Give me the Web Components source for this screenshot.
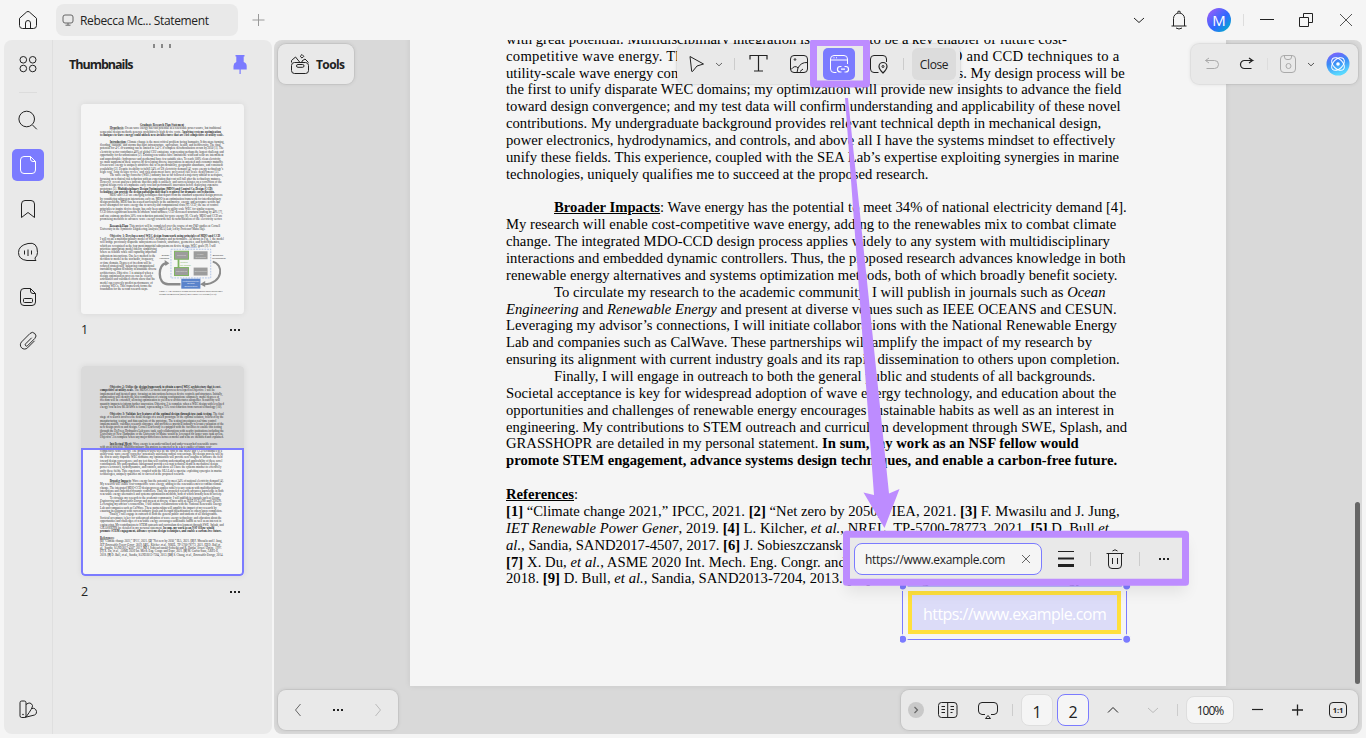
<!DOCTYPE html>
<html lang="en">
<head>
<meta charset="utf-8">
<title>Rebecca Mc... Statement</title>
<style>
    body
    {
        --drop: 2px;
        margin: 0;
        width: 1366px;
        height: 738px;
        overflow: hidden;
        background: #f5f5f5;
        color: #222;
        font: 12px/16px "Open Sans", "Noto Sans", sans-serif;
    }
</style>
</head>
<body>
<app-shell>
    <top-bar slot="top"></top-bar>
    <side-rail slot="side"></side-rail>
    <thumb-panel slot="side"></thumb-panel>
    <doc-viewer></doc-viewer>
</app-shell>
<script>
// 24x24 line icons
const ICONS = {
    home: '<path d="M3.5 10.3 10.6 4q1.4-1.100 2.800 0l7.100 6.300V17.500q0 3-3 3h-11q-3 0-3-3zM9.500 20.500V15a2.500 2.500 0 0 1 5 0v5.500"/>',
    monitor: '<rect x="7" y="7" width="10" height="8" rx="2"/><path d="M12 15v2M9.500 17.200h5"/>',
    plus: '<path d="M12.500 6v12M6.500 12h12"/>',
    plusBold: '<path d="M11.500 6.500v11M6 12h11" stroke-width="1.300"/>',
    minus: '<path d="M6 11.500h11" stroke-width="1.200"/>',
    winmin: '<path d="M5 11.500h14"/>',
    restore: '<path d="M9.500 9.500v-4h9v9h-4M5.500 9.500h9v9h-9z"/>',
    close: '<path d="m6 6 12 12M18 6 6 18"/>',
    x: '<path d="m8 8 8 8M16 8l-8 8"/>',
    down: '<path d="m7 10 5 4.500 5-4.500"/>',
    downSmall: '<path d="m9 11 3 2.800 3-2.800"/>',
    up: '<path d="m7 14.500 5-5 5 5"/>',
    left: '<path d="m14.500 6-5 6 5 6"/>',
    right: '<path d="m9.500 6 5 6-5 6"/>',
    rightSmall: '<path d="m10.500 9 3 3-3 3" stroke-width="1.200"/>',
    bell: '<path d="M4.500 18h15M6.500 18v-7.500a5.500 5.500 0 0 1 11 0V18M10.500 4.600a1.500 1.500 0 0 1 3 0M9 20q3 2 6 0"/>',
    grid: '<circle cx="7.300" cy="7.800" r="3.300"/><circle cx="16.700" cy="7.800" r="3.300"/><circle cx="7.300" cy="16.500" r="3.300"/><circle cx="16.700" cy="16.500" r="3.300"/>',
    search: '<circle cx="10.700" cy="10" r="7.800"/><path d="m16.500 16 4.300 4.300"/>',
    page: '<path d="M14.500 3.500H8q-3.500 0-3.500 3.500v10q0 3.500 3.500 3.500h8q3.500 0 3.500-3.500V8.500zv2.500q0 2.500 2.500 2.500H19.500"/>',
    bookmark: '<path d="M5.500 20.500V7q0-3.500 3.500-3.500h6q3.500 0 3.500 3.500v13.500L12 15.500z"/>',
    comment: '<path d="M20 19.500H11Q2.500 18.500 2.500 11.500T12 2.500t9.500 9q0 3-2.500 5.500 0 1.500 1 2.500zM8.500 9.500v4M12 8.500v6.500M15.500 9.500v4"/>',
    form: '<path d="M14.500 3.500H8q-3.500 0-3.500 3.500v10q0 3.500 3.500 3.500h8q3.500 0 3.500-3.500V8.500zv2.500q0 2.500 2.500 2.500H19.500"/><rect x="7.500" y="13.500" width="9" height="4" rx="1"/>',
    clip: '<path d="m15.500 8.500-6.300 6.300a1.300 1.300 0 0 0 2 2l7.600-7.600a3.600 3.600 0 0 0-5.100-5.100L5 12.800a4.300 4.300 0 0 0 6.200 6.200l7.300-7.300" transform="translate(.8 .6) scale(.96)"/>',
    swatch: '<rect x="4" y="4" width="6" height="16.500" rx="1.700"/><path d="M10 7.500q4.500-3.500 6.500 1 .500 2-6.500 11.500M16 11.500q3.500-1 4.500 3 .500 2.500-2 3.500L8.500 20.500"/><circle cx="7" cy="17.500" r=".4"/>',
    pin: '<path fill="currentColor" stroke="none" d="M7.500 3h9v1.500h-.8v5.500q3 1.200 3 4V17.500H5.500V14q0-2.800 2.800-4V4.500h-.8zM11.500 17h1.200v5h-1.200z"/>',
    tools: '<rect x="3.500" y="10.500" width="17" height="11" rx="3"/><rect x="8.500" y="12.500" width="7.500" height="2.800" rx="1.400"/><path d="M3.500 10.500v-2l4-3.500 4.500 5.500M14 10.500v-1.500l3-2 3.500 3.500M14 2.500l1.800 1.800L14 6.100l-1.800-1.800z"/>',
    undo: '<path d="M10 6 6.500 8.500h9a4 4 0 0 1 0 8H7.500M6.500 8.500 10 11"/>',
    redo: '<path d="M14 6l3.500 2.500h-8a4 4 0 0 0 0 8h7M17.500 8.500 14 11" stroke-width="1.200"/>',
    save: '<rect x="4.500" y="3.500" width="15" height="17" rx="3.500"/><path d="M8.500 3.500v1.500q0 2.500 2.500 2.500h2q2.500 0 2.500-2.500V3.500"/><circle cx="12.500" cy="14" r="2.500"/>',
    cursor: '<path d="M5 4.500 18.500 12l-6.500 2-4.500 5.500q-.500.500-.800-.2z" stroke-linejoin="round"/>',
    text: '<path d="M3 7.500v-4h17v4M11.500 3.500v15.500M7 19h9" stroke-width="1.200"/>',
    image: '<rect x="3.500" y="3.500" width="17" height="17" rx="3.500"/><circle cx="8" cy="7.500" r=".8"/><path d="M4 17.500q4-5 7-1.500l-1 4.500M11 16q3-6 9.500-5.500M13 19.500l3-2.500"/>',
    weblink: '<path d="M9.500 20.500H7q-3.500 0-3.500-3.500V7q0-3.500 3.500-3.500h10q3.500 0 3.500 3.500v5M3.500 8h17M6.500 5.800h1M9 5.800h1"/><path d="M14.500 14.500h-1.300a2.700 2.700 0 0 0 0 5.500h1.300M17.500 14.500h1.300a2.700 2.700 0 0 1 0 5.500h-1.300M14 17.200h4" stroke-width="1.200"/>',
    place: '<path d="M11.500 20.500H7q-3.500 0-3.500-3.500V7q0-3.500 3.500-3.500h9q3.500 0 3.500 3.500v3"/><path d="M16 21q-4-4-4-6.500a4 4 0 0 1 8 0q0 2.500-4 6.500z" stroke-width="1.200"/><circle cx="16" cy="14.500" r="1"/>',
    weight: '<path d="M4 4.500h16" stroke-width="1"/><path d="M4 11.500h16" stroke-width="2"/><path d="M4 18.500h16" stroke-width="3"/>',
    trash: '<path d="M3.500 6.500h17M5.500 6.500V18q0 3.500 3.500 3.500h6q3.500 0 3.500-3.500V6.500M9.500 4q2.500-2.500 5 0M9.500 11v6M14.500 11v6"/>',
    book: '<rect x="2.500" y="4.500" width="18.500" height="15" rx="3"/><path d="M11.700 4.500v15M5.500 8.500H9M5.500 11.500H9M5.500 14.500H9M14.500 8.500h3.500M14.500 11.500h3.500M14.500 14.500h2"/>',
    present: '<path d="M9 16.500H6Q2.500 16 2.500 13V8q0-3.500 3.500-3.500h12q3.500 0 3.500 3.500v5q0 3-3.500 3.500h-3M12 17.500l2.500 3h-5z"/>',
    dots: '<path fill="currentColor" stroke="none" d="M7 11h2v2H7zM11 11h2v2h-2zM15 11h2v2h-2z"/>'
};

// [text, width, indent]; null is an empty line
const SHEETS = {
    one: [
        ['<b><u>Graduate Research Plan Statement</u></b>', 222, 200],
        ['<b><u>Hypothesis</u></b>: Ocean wave energy has vast potential as a renewable power source, but traditional', 560, 48],
        ['sequential design methods generate prohibitively high device costs. <b>Applying systems optimization</b>', 607],
        ['<b>techniques to wave energy could unlock new architectures that are cost competitive at utility scale.</b>', 621],
        null,
        ['<b><u>Introduction</u></b>: Climate change is the most critical problem facing humanity. It threatens farming,', 576, 48],
        ['flooding, tsunami, and storms that hurt infrastructure, agriculture, health, and biodiversity. The final', 606],
        ['potential for 4°C of warming can be limited to 1.4°C if complete decarbonization occurs by 2050 [1]. The', 620],
        ['electricity sector contributes 40% of global CO2 emissions, representing perhaps the largest challenge and', 622],
        ['opportunity for decarbonization [2]. Existing renewables have limitations: wind and solar are intermittent', 620],
        ['and unpredictable; hydropower and geothermal have few suitable sites. To reach 100% clean electricity,', 608],
        ['we must supplement these sources by developing diverse innovations in untested and economic maturity.', 618],
        ['Ocean wave energy is uniquely attractive due to its predictability, geographic abundance, and consistent', 617],
        ['availability [3]. Despite its ability to fulfill 34% of US electricity demand [4], wave energy technology’s', 618],
        ['high cost, long design cycles, and risk abatement have prevented full scale deployment [5].', 598],
        ['The wave energy converter (WEC) industry has so far followed a trajectory similar to aerospace,', 570, 48],
        ['focusing on technical risk reduction with an expectation that cost will fall after the technology matures.', 606],
        ['However, recent analyses indicate that this path is unlikely, and success hinges on a correction of the', 612],
        ['typical design cycle to emphasize early cost and performance innovation before deploying expensive', 594],
        ['prototypes [5]. <b>Multidisciplinary Design Optimization (MDO) and Control Co-Design (CCD)</b>', 565],
        ['<b>techniques can provide the design paradigm shift that is required for dramatic cost reduction.</b>', 575],
        ['MDO and CCD are emerging techniques that depart from the standard sequential design process', 566, 48],
        ['by considering subsystem interactions early on. MDO is an optimization framework for interdisciplinary', 608],
        ['design problems. MDO has been used successfully in the automotive, energy, and aerospace sectors but', 602],
        ['never attempted for wave energy due to novelty and computational costs [6]. CCD, the use of control', 594],
        ['principles to inspire device design, has only been applied to utility scale WEC for similar reasons.', 576],
        ['CCD offers significant benefits in offshore wind turbines; CCD decreased structural loading by 40% [7],', 616],
        ['and one estimate predicts 50% cost reduction potential for wave energy [8]. Clearly, MDO and CCD are', 614],
        ['promising methods to advance wave energy towards full decarbonization of the electricity sector.', 614],
        null,
        ['<b><u>Research Plan</u></b>: This project will be completed over the course of my PhD studies at Cornell', 555, 48],
        ['University in the Symbiotic Engineering Analysis (SEA) Lab, led by Professor Maha Haji.', 528],
        null,
        ['<b>Objective 1: Develop a novel WEC design framework using principles of MDO and CCD</b>', 555, 48],
        ['I will create a multidisciplinary model of WEC dynamics and performance. As shown in Fig. 1, the model', 622],
        ['will bridge previously disparate subsystems as controls, structures, geometries, and hydrodynamics,', 602],
        ['which are recognized as the four most impactful subsystems on device design. WEC goals [9]. I will', 580],
        ['prioritize appropriate model fidelity, simplifying', 284],
        ['where as feasible while still capturing important', 284],
        ['subsystem interactions. One key method is the', 278],
        ['decision to model in the stochastic, frequency,', 270],
        ['or time domain. Degrees of freedom will be', 258],
        ['reduced strategically, balancing computational', 272],
        ['tractability against flexibility in attainable diverse', 284],
        ['architectures. Objective 1 is attained when a', 266],
        ['design optimization process can be clearly', 262],
        ['articulated and validated efforts show that the', 276],
        ['model can correctly predict performance of', 264],
        ['existing WECs. This framework forms the', 260],
        ['foundation for the second research steps.', 240]
    ],
    two: [
        ['<b>Objective 2: Utilize the design framework to obtain a novel WEC architecture that is cost-</b>', 560, 48],
        ['<b>competitive at utility-scale.</b> The MDO/CCD model and process developed in Objective 1 will be', 576],
        ['implemented and iterated upon, focusing on interactions between device controls and structures. Initially,', 616],
        ['optimization will identify the best combination of existing configurations; ultimately, model degrees of', 598],
        ['freedom will be extended, allowing optimization to yield new architectures altogether. Sensitivity will', 602],
        ['quantify impacts to inform further innovation. Objective 2 is complete when a WEC design with levelized', 622],
        ['energy cost below $0.30/kWh is found, representing a 75% cost reduction from current technology [10].', 612],
        null,
        ['<b>Objective 3: Validate key features of the optimal design through tow-tank testing.</b> The final', 574, 48],
        ['stage of research involves the detail design of a scaled prototype of the optimal solution, followed by the', 620],
        ['manufacturing, testing, and data analysis of the prototype. The testing investigates real-time control', 584],
        ['implementation, validates research outcomes, and provides a practical industry-relevant evaluation of the', 622],
        ['new design process and design. Cornell University is equipped with the facilities to enable this testing', 612],
        ['through the DeFrees Hydraulics Lab wave tank, and collaborations with nearby institutions including the', 622],
        ['University of New Hampshire or the University of Maine would be leveraged for larger wave tank access.', 618],
        ['Objective 3 is complete when any major differences between model and tests are identified and explained.', 622],
        null,
        ['<b><u>Intellectual Merit</u></b>: Wave energy is an under-utilized and under-researched renewable source', 542, 48],
        ['with great potential. Multidisciplinary integration is expected to be a key enabler of future cost-', 561],
        ['competitive wave energy. The proposed work will be the first to use MDO and CCD techniques to a', 614],
        ['utility-scale wave energy converter, potentially unlocking radical cost savings. My design process will be', 619],
        ['the first to unify disparate WEC domains; my optimization will provide new insights to advance the field', 615],
        ['toward design convergence; and my test data will confirm understanding and applicability of these novel', 615],
        ['contributions. My undergraduate background provides relevant technical depth in mechanical design,', 595],
        ['power electronics, hydrodynamics, and controls, and above all I have the systems mindset to effectively', 609],
        ['unify these fields. This experience, coupled with the SEA Lab’s expertise exploiting synergies in marine', 613],
        ['technologies, uniquely qualifies me to succeed at the proposed research.', 422],
        null,
        ['<b><u>Broader Impacts</u></b>: Wave energy has the potential to meet 34% of national electricity demand [4].', 573, 48],
        ['My research will enable cost-competitive wave energy, adding to the renewables mix to combat climate', 610],
        ['change. The integrated MDO-CCD design process applies widely to any system with multidisciplinary', 604],
        ['interactions and embedded dynamic controllers. Thus, the proposed research advances knowledge in both', 620],
        ['renewable energy alternatives and systems optimization methods, both of which broadly benefit society.', 611],
        ['To circulate my research to the academic community, I will publish in journals such as <i>Ocean</i>', 552, 48],
        ['<i>Engineering</i> and <i>Renewable Energy</i> and present at diverse venues such as IEEE OCEANS and CESUN.', 611],
        ['Leveraging my advisor’s connections, I will initiate collaborations with the National Renewable Energy', 611],
        ['Lab and companies such as CalWave. These partnerships will amplify the impact of my research by', 586],
        ['ensuring its alignment with current industry goals and its rapid dissemination to others upon completion.', 614],
        ['Finally, I will engage in outreach to both the general public and students of all backgrounds.', 541, 48],
        ['Societal acceptance is key for widespread adoption of wave energy technology, and education about the', 610],
        ['opportunities and challenges of renewable energy encourages sustainable habits as well as an interest in', 608],
        ['engineering. My contributions to STEM outreach and curriculum development through SWE, Splash, and', 621],
        ['GRASSHOPR are detailed in my personal statement. <b>In sum, my work as an NSF fellow would</b>', 573],
        ['<b>promote STEM engagement, advance systems design techniques, and enable a carbon-free future.</b>', 611],
        null,
        ['<b><u>References</u></b>:', 72],
        ['<b>[1]</b> “Climate change 2021,” IPCC, 2021. <b>[2]</b> “Net zero by 2050,” IEA, 2021. <b>[3]</b> F. Mwasilu and J. Jung,', 614],
        ['<i>IET Renewable Power Gener</i>, 2019. <b>[4]</b> L. Kilcher, <i>et al.</i>, NREL, TP-5700-78773, 2021. <b>[5]</b> D. Bull <i>et</i>', 603],
        ['<i>al.</i>, Sandia, SAND2017-4507, 2017. <b>[6]</b> J. Sobieszczanski-Sobieski and R. Haftka, <i>Struct. Optim.</i>, 1997.', 612],
        ['<b>[7]</b> X. Du, <i>et al.</i>, ASME 2020 Int. Mech. Eng. Congr. and Expo, 2021. <b>[8]</b> M. Garcia-Sanz, ARPA-E,', 596],
        ['2018. <b>[9]</b> D. Bull, <i>et al.</i>, Sandia, SAND2013-7204, 2013. <b>[10]</b> S. Chung, <i>et al.</i>, <i>Renewable Energy</i>, 2014.', 618]
    ]
};

class UiIcon extends HTMLElement
{
    connectedCallback()
    {
        const root = this.attachShadow({mode: "open"});
        root.innerHTML = `
            <style>
                :host { display: block; width: 24px; height: 24px; flex: none; }
                svg { display: block; fill: none; stroke: currentColor; stroke-width: 1; }
            </style>
            <svg width="24" height="24" viewBox="0 0 24 24">${ICONS[this.getAttribute("name")]}</svg>
        `;
    }
}

// One line of text spread to an exact width
class FitText extends HTMLElement
{
    connectedCallback()
    {
        const root = this.attachShadow({mode: "open"});
        root.innerHTML = `
            <style>
                :host { display: block; padding-top: var(--drop, 0); white-space: nowrap; flex: none; }
                span { display: inline-block; }
            </style>
            <span><slot></slot></span>
        `;
        const span = root.querySelector("span");
        const width = Number(this.getAttribute("width"));
        const natural = span.offsetWidth;
        if (width && natural)
            span.style.letterSpacing = `${(width - natural) / this.textContent.length}px`;
    }
}

class DocPage extends HTMLElement
{
    connectedCallback()
    {
        const root = this.attachShadow({mode: "open"});
        const name = this.getAttribute("sheet");
        // lines before "from" are scrolled out, only their height is kept
        const from = Number(this.getAttribute("from") || 0);
        const lines = SHEETS[name].map((line, i) => {
            if (!line || i < from)
                return '<p></p>';
            return `<p style="padding-left:${line[2] || 0}px"><fit-text width="${line[1]}">${line[0]}</fit-text></p>`;
        }).join("");
        root.innerHTML = `
            <style>
                :host
                {
                    --drop: 0;
                    display: block;
                    position: relative;
                    box-sizing: border-box;
                    width: 816px;
                    height: 1056px;
                    padding: 97.4px 96px 0;
                    background: #f5f5f5;
                    color: #000;
                    font: 14.65px/16.86px "Liberation Serif", serif;
                }
                p { margin: 0; height: 16.86px; }
                figure { position: absolute; left: 388px; top: 714px; margin: 0; }
            </style>
            ${lines}
            ${name === "one" ? '<figure><wec-figure></wec-figure></figure>' : ''}
        `;
    }
}

class WecFigure extends HTMLElement
{
    connectedCallback()
    {
        this.attachShadow({mode: "open"}).innerHTML = `
            <style>
                svg { display: block; font: 12px "Liberation Sans", sans-serif; text-anchor: middle; }
                .small { font: 12px "Liberation Serif", serif; text-anchor: start; }
            </style>
            <svg width="344" height="250" viewBox="0 0 344 250">
                <text x="162" y="12" fill="#3f6fc4">WEC Model</text>
                <rect x="64" y="16" width="200" height="144" fill="#f5f5f5" stroke="#6c94d8" stroke-width="3" stroke-dasharray="9 5"/>
                <path d="M102 66v60" stroke="#68a845" stroke-width="9"/>
                <g fill="#8c8c8c" stroke="#68a845" stroke-width="5">
                    <rect x="82" y="26" width="70" height="40"/>
                    <rect x="82" y="108" width="70" height="40"/>
                </g>
                <rect x="178" y="26" width="70" height="40" fill="#8c8c8c"/>
                <rect x="178" y="108" width="70" height="40" fill="#8c8c8c"/>
                <g fill="#ddd">
                    <text x="117" y="50">Controls</text><text x="213" y="44">Hydro-</text><text x="213" y="58">dynamics</text>
                    <text x="117" y="132">Structures</text><text x="213" y="132">Geometries</text>
                </g>
                <text x="130" y="84" fill="#68a845">Control</text><text x="137" y="98" fill="#68a845">Co-design</text>
                <text x="36" y="52">Design</text><text x="30" y="66">Variables</text>
                <text x="300" y="52">Economic</text><text x="306" y="66">Performance</text>
                <path d="M112 192H50C-8 190-2 90 40 86" fill="none" stroke="#777" stroke-width="12"/>
                <path d="m32 70 24 16-20 14z" fill="#777"/>
                <path d="M274 78C330 90 330 188 230 192" fill="none" stroke="#777" stroke-width="10"/>
                <path d="m236 176-26 16 26 14z" fill="#777"/>
                <rect x="116" y="164" width="96" height="50" fill="#3f6fc4"/>
                <g fill="#e5ebf8"><text x="164" y="178">Multidisciplinary</text><text x="164" y="193">Design</text><text x="164" y="208">Optimization</text></g>
                <text class="small" x="4" y="230">Figure 1: The proposed design process integrates Multidisciplinary</text>
                <text class="small" x="4" y="245">Design Optimization (MDO) and Control Co-Design (CCD)</text>
            </svg>
        `;
    }
}

class AppShell extends HTMLElement
{
    connectedCallback()
    {
        this.attachShadow({mode: "open"}).innerHTML = `
            <style>
                :host { display: flex; flex-direction: column; width: 1366px; height: 738px; }
                .body { display: flex; gap: 2px; flex: 1; padding: 0 4px 4px; min-height: 0; }
                .side
                {
                    display: flex;
                    width: 268px;
                    flex: none;
                    background: #e9e9e9;
                    border-radius: 8px;
                }
            </style>
            <slot name="top"></slot>
            <div class="body">
                <div class="side"><slot name="side"></slot></div>
                <slot></slot>
            </div>
        `;
    }
}

class TopBar extends HTMLElement
{
    connectedCallback()
    {
        this.attachShadow({mode: "open"}).innerHTML = `
            <style>
                :host { display: flex; align-items: center; height: 40px; flex: none; padding-left: 16px; }
                .tab
                {
                    display: flex;
                    align-items: center;
                    box-sizing: border-box;
                    width: 182px;
                    height: 32px;
                    margin: 0 8px 0 16px;
                    border-radius: 8px;
                    background: #e9e9e9;
                }
                .tab ui-icon { color: #666; }
                .add { color: #999; }
                .right { display: flex; align-items: center; margin-left: auto; }
                .cell { display: flex; justify-content: center; width: 40px; }
                .avatar
                {
                    width: 24px;
                    height: 24px;
                    border-radius: 50%;
                    color: #fff;
                    font: 15px/24px "Open Sans", sans-serif;
                    text-align: center;
                    background: linear-gradient(135deg, #a05cf8 5%, #2f68ff 55%, #00b4c8 95%);
                }
                i { width: 1px; height: 12px; margin: 0 3px 0 4px; background: #ddd; }
            </style>
            <ui-icon name="home"></ui-icon>
            <div class="tab"><ui-icon name="monitor"></ui-icon><fit-text width="129">Rebecca Mc... Statement</fit-text></div>
            <ui-icon class="add" name="plus"></ui-icon>
            <div class="right">
                <div class="cell"><ui-icon name="down"></ui-icon></div>
                <div class="cell"><ui-icon name="bell"></ui-icon></div>
                <div class="cell"><div class="avatar">M</div></div>
                <i></i>
                <div class="cell" style="width:39px"><ui-icon name="winmin"></ui-icon></div>
                <div class="cell"><ui-icon name="restore"></ui-icon></div>
                <div class="cell" style="color:#555"><ui-icon name="close"></ui-icon></div>
            </div>
        `;
    }
}

class SideRail extends HTMLElement
{
    connectedCallback()
    {
        this.attachShadow({mode: "open"}).innerHTML = `
            <style>
                :host
                {
                    display: flex;
                    flex-direction: column;
                    align-items: center;
                    width: 48px;
                    border-right: 1px solid #dfdfdf;
                }
                div { display: grid; place-items: center; width: 32px; height: 32px; margin: 6px 0; }
                .first { margin: 8px 0; }
                .active { background: #7b7bff; border-radius: 5px; color: #fff; }
                .last { margin: auto 0 9px; }
                i { width: 18px; height: 1px; margin: 4px 0 6px; background: #dcdcdc; }
            </style>
            <div class="first"><ui-icon name="grid"></ui-icon></div>
            <i></i>
            <div><ui-icon name="search"></ui-icon></div>
            <div class="active"><ui-icon name="page"></ui-icon></div>
            <div><ui-icon name="bookmark"></ui-icon></div>
            <div><ui-icon name="comment"></ui-icon></div>
            <div><ui-icon name="form"></ui-icon></div>
            <div><ui-icon name="clip"></ui-icon></div>
            <div class="last"><ui-icon name="swatch"></ui-icon></div>
        `;
    }
}

class ThumbPanel extends HTMLElement
{
    connectedCallback()
    {
        this.attachShadow({mode: "open"}).innerHTML = `
            <style>
                :host { display: flex; flex-direction: column; flex: 1; }
                .grip { display: flex; justify-content: center; gap: 6px; padding: 4px 2px 0 0; height: 4px; }
                .grip i { width: 2px; height: 4px; background: #888; }
                header
                {
                    display: flex;
                    justify-content: space-between;
                    align-items: center;
                    height: 24px;
                    margin: 4px 20px 28px 16px;
                    font-weight: 700;
                    font-size: 12.5px;
                }
                header ui-icon { color: #7b7bff; }
                page-thumb + page-thumb { margin-top: 24px; }
            </style>
            <div class="grip"><i></i><i></i><i></i></div>
            <header><fit-text width="63">Thumbnails</fit-text><ui-icon name="pin"></ui-icon></header>
            <page-thumb sheet="one">1</page-thumb>
            <page-thumb sheet="two" view>2</page-thumb>
        `;
    }
}

class PageThumb extends HTMLElement
{
    connectedCallback()
    {
        this.attachShadow({mode: "open"}).innerHTML = `
            <style>
                :host { display: block; width: 163px; height: 238px; margin-left: 28px; }
                .sheet
                {
                    position: relative;
                    width: 163px;
                    height: 210px;
                    overflow: hidden;
                    border-radius: 4px;
                    background: #f5f5f5;
                    box-shadow: 0 0 6px rgba(0, 0, 0, .08);
                }
                doc-page { transform: scale(.199); transform-origin: 0 0; opacity: .85; }
                .shade { position: absolute; inset: 0 0 128px; background: rgba(0, 0, 0, .11); }
                .view
                {
                    position: absolute;
                    inset: 82px 0 0;
                    border: 2px solid #7b7bff;
                    border-radius: 0 0 4px 4px;
                }
                :host(:not([view])) .shade, :host(:not([view])) .view { display: none; }
                .foot { display: flex; justify-content: space-between; align-items: center; height: 32px; font-size: 12.5px; margin-right: -3px; }
            </style>
            <div class="sheet">
                <doc-page sheet="${this.getAttribute("sheet")}"></doc-page>
                <div class="shade"></div>
                <div class="view"></div>
            </div>
            <div class="foot"><slot></slot><ui-icon name="dots"></ui-icon></div>
        `;
    }
}

// Rounded floating strip, 40px high
class FloatBar extends HTMLElement
{
    connectedCallback()
    {
        this.attachShadow({mode: "open"}).innerHTML = `
            <style>
                :host
                {
                    display: flex;
                    align-items: center;
                    height: 40px;
                    border-radius: 8px;
                    background: #e9e9e9;
                    box-shadow: 0 0 0 1px rgba(0, 0, 0, .04), 0 0 4px rgba(0, 0, 0, .12);
                }
            </style>
            <slot></slot>
        `;
    }
}

class DocViewer extends HTMLElement
{
    connectedCallback()
    {
        this.attachShadow({mode: "open"}).innerHTML = `
            <style>
                :host
                {
                    display: block;
                    position: relative;
                    flex: 1;
                    overflow: hidden;
                    border-radius: 8px;
                    background: #d9d9d9;
                }
                .page { margin: -410px 0 0 136px; width: 816px; box-shadow: 0 0 6px rgba(0, 0, 0, .08); }
                float-bar, link-box, link-bar { position: absolute; }
                .tools { left: 4px; top: 4px; width: 76px; }
                .tools ui-icon { margin: 0 4px 0 10px; }
                .edit { left: 403px; top: 4px; width: 283px; }
                .history { right: 4px; top: 4px; width: 167px; }
                .nav { left: 4px; bottom: 4px; width: 120px; }
                .pager { right: 4px; bottom: 4px; width: 457px; }
                link-box { left: 626px; top: 543px; }
                link-bar { left: 576px; top: 498px; }
                .cell { display: flex; align-items: center; justify-content: center; flex: none; }
                .sep { width: 1px; height: 12px; flex: none; background: #ccc; }
                .on { width: 32px; height: 32px; border-radius: 5px; background: #7b7bff; color: #fff; }
                .close { width: 44px; height: 32px; margin-left: 8px; border-radius: 6px; background: #dcdcdc; }
                .ai { margin-left: 3px; }
                .num
                {
                    box-sizing: border-box;
                    width: 32px;
                    height: 32px;
                    border: 1px solid #dedede;
                    border-radius: 8px;
                    background: #f5f5f5;
                    font-size: 16px;
                }
                .page-num { padding-top: 3px; }
                .current { margin-left: 4px; border-color: #7b7bff; }
                .zoom { width: 48px; height: 28px; margin: 0 0 0 8px; font-size: 12px; }
                .more { width: 16px; height: 16px; border-radius: 50%; background: #c9c9c9; color: #666; }
                .ratio
                {
                    box-sizing: border-box;
                    width: 18px;
                    height: 16px;
                    border: 1px solid #222;
                    border-radius: 4px;
                    font: bold 7.5px/14px "Open Sans", sans-serif;
                }
                .scroll { position: absolute; right: 2px; top: 462px; width: 5px; height: 182px; border-radius: 3px; background: #666; }
                .marks { position: absolute; left: 0; top: 0; }
            </style>
            <div class="page"><doc-page sheet="two" from="18"></doc-page></div>
            <div class="scroll"></div>
            <link-box>https://www.example.com</link-box>
            <link-bar>https://www.example.com</link-bar>
            <float-bar class="tools"><ui-icon name="tools"></ui-icon><fit-text width="28" style="font-weight:bold">Tools</fit-text></float-bar>
            <float-bar class="edit">
                <div class="cell" style="width:40px"><ui-icon name="cursor"></ui-icon></div>
                <ui-icon name="downSmall" style="margin-left:-10px;color:#666"></ui-icon>
                <div class="sep" style="margin:0 12px 0 3px"></div>
                <ui-icon name="text"></ui-icon>
                <ui-icon name="image" style="margin:0 12px 0 16px"></ui-icon>
                <div class="cell on"><ui-icon name="weblink"></ui-icon></div>
                <ui-icon name="place" style="margin:0 12px"></ui-icon>
                <div class="sep"></div>
                <div class="cell close"><fit-text width="28">Close</fit-text></div>
            </float-bar>
            <float-bar class="history">
                <div class="cell" style="width:40px;color:#aaa"><ui-icon name="undo"></ui-icon></div>
                <div class="cell" style="width:32px"><ui-icon name="redo"></ui-icon></div>
                <div class="sep" style="margin:0 8px 0 4px;background:#ddd"></div>
                <ui-icon name="save" style="color:#aaa"></ui-icon>
                <ui-icon name="downSmall" style="margin:0 0 0 -1px;color:#555"></ui-icon>
                <svg class="ai" width="24" height="24" viewBox="0 0 24 24">
                    <defs><linearGradient id="g" x1="0" y1="0" x2=".3" y2="1"><stop stop-color="#8a58ff"/><stop offset=".5" stop-color="#3a8bf5"/><stop offset="1" stop-color="#58d8ff"/></linearGradient></defs>
                    <circle cx="12" cy="12" r="11.500" fill="url(#g)"/>
                    <g fill="none" stroke="#fff" stroke-width="1">
                        <ellipse cx="12" cy="12" rx="7.600" ry="4.800" transform="rotate(45 12 12)"/>
                        <ellipse cx="12" cy="12" rx="7.600" ry="4.800" transform="rotate(-45 12 12)"/>
                    </g>
                    <circle cx="12" cy="12" r="1.800" fill="#fff"/>
                </svg>
            </float-bar>
            <float-bar class="nav">
                <div class="cell" style="width:40px;color:#666"><ui-icon name="left"></ui-icon></div>
                <div class="cell" style="width:40px"><ui-icon name="dots"></ui-icon></div>
                <div class="cell" style="width:40px;color:#bbb"><ui-icon name="right"></ui-icon></div>
            </float-bar>
            <float-bar class="pager">
                <div class="cell" style="width:30px"><div class="cell more"><ui-icon name="rightSmall"></ui-icon></div></div>
                <div class="cell" style="width:33px"><ui-icon name="book"></ui-icon></div>
                <div class="cell" style="width:48px"><ui-icon name="present"></ui-icon></div>
                <div class="sep" style="margin-right:8px"></div>
                <div class="cell num page-num">1</div>
                <div class="cell num page-num current">2</div>
                <div class="cell" style="width:48px"><ui-icon name="up"></ui-icon></div>
                <div class="cell" style="width:32px;color:#bbb"><ui-icon name="down"></ui-icon></div>
                <div class="sep" style="margin-left:8px"></div>
                <div class="cell num zoom"><fit-text width="27">100%</fit-text></div>
                <div class="cell" style="width:47px"><ui-icon name="minus"></ui-icon></div>
                <div class="cell" style="width:33px"><ui-icon name="plusBold"></ui-icon></div>
                <div class="cell" style="width:48px"><div class="cell ratio">1:1</div></div>
            </float-bar>
            <svg class="marks" width="1088" height="694" viewBox="274 40 1088 694" fill="none" stroke="#bd8cff" stroke-linejoin="round">
                <rect x="813.500" y="42.500" width="53" height="41.500" stroke-width="7"/>
                <rect x="846.500" y="534.300" width="339" height="48" stroke-width="7"/>
                <path fill="#bd8cff" stroke="none" d="M845 98h3l41 395.500 10.500-4.500-15 39-21-35.500 10.500 2.500z"/>
            </svg>
        `;
    }
}

// Link annotation with its selection frame
class LinkBox extends HTMLElement
{
    connectedCallback()
    {
        this.attachShadow({mode: "open"}).innerHTML = `
            <style>
                :host { display: block; width: 230px; height: 60px; }
                svg { position: absolute; left: 0; top: 0; }
                div
                {
                    display: flex;
                    align-items: center;
                    box-sizing: border-box;
                    width: 213px;
                    height: 43px;
                    margin: 8px 0 0 8px;
                    padding-left: 11px;
                    border: 4px solid #ffe03c;
                    background: #dcdcf8;
                    color: #fff;
                    font: 16px/22px "Open Sans", sans-serif;
                }
            </style>
            <svg width="232" height="64" fill="#7b7bff" stroke="#7b7bff">
                <path d="M2.500 3h224v53.500h-224z" fill="none"/>
                <g stroke="#f5f5f5" stroke-width="1.500">
                    <circle cx="2.700" cy="3" r="4.200"/><circle cx="226.700" cy="3" r="4.200"/>
                    <circle cx="2.700" cy="56.300" r="4.200"/><circle cx="226.700" cy="56.300" r="4.200"/>
                </g>
            </svg>
            <div><fit-text width="183">${this.textContent}</fit-text></div>
        `;
    }
}

class LinkBar extends HTMLElement
{
    connectedCallback()
    {
        this.attachShadow({mode: "open"}).innerHTML = `
            <style>
                :host
                {
                    display: flex;
                    align-items: center;
                    width: 332px;
                    height: 42px;
                    background: #e9e9e9;
                    box-shadow: 0 8px 14px 4px rgba(0, 0, 0, .08);
                }
                .field
                {
                    display: flex;
                    align-items: center;
                    justify-content: space-between;
                    box-sizing: border-box;
                    width: 188px;
                    height: 32px;
                    margin: 0 12px 0 4px;
                    padding: 0 3px 0 10px;
                    border: 1px solid #7b7bff;
                    border-radius: 8px;
                    background: #f5f5f5;
                }
                .field ui-icon { color: #666; }
                i { width: 1px; height: 14px; margin: 0 12px; background: #ccc; }
            </style>
            <div class="field"><fit-text width="140">${this.textContent}</fit-text><ui-icon name="x"></ui-icon></div>
            <ui-icon name="weight"></ui-icon><i></i>
            <ui-icon name="trash"></ui-icon><i></i>
            <ui-icon name="dots"></ui-icon>
        `;
    }
}

customElements.define("app-shell", AppShell);
customElements.define("top-bar", TopBar);
customElements.define("side-rail", SideRail);
customElements.define("thumb-panel", ThumbPanel);
customElements.define("page-thumb", PageThumb);
customElements.define("doc-viewer", DocViewer);
customElements.define("float-bar", FloatBar);
customElements.define("link-box", LinkBox);
customElements.define("link-bar", LinkBar);
customElements.define("doc-page", DocPage);
customElements.define("wec-figure", WecFigure);
customElements.define("ui-icon", UiIcon);
customElements.define("fit-text", FitText);
</script>
</body>
</html>
